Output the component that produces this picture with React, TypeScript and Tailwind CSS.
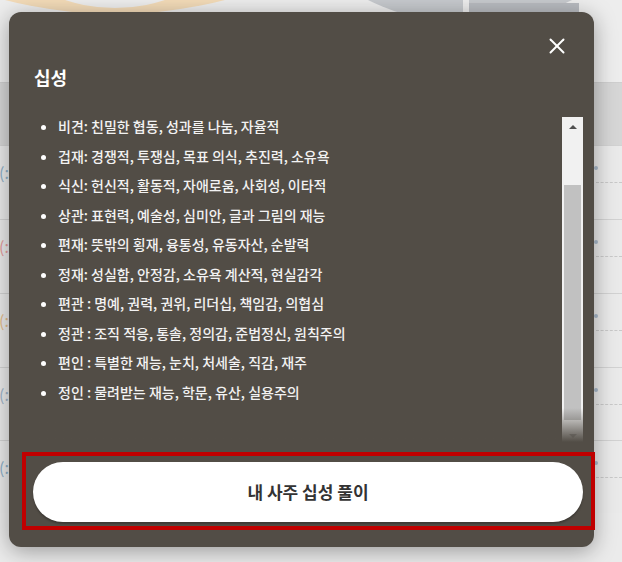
import { X } from "lucide-react";

const traits = [
	"비견: 친밀한 협동, 성과를 나눔, 자율적",
	"겁재: 경쟁적, 투쟁심, 목표 의식, 추진력, 소유욕",
	"식신: 헌신적, 활동적, 자애로움, 사회성, 이타적",
	"상관: 표현력, 예술성, 심미안, 글과 그림의 재능",
	"편재: 뜻밖의 횡재, 융통성, 유동자산, 순발력",
	"정재: 성실함, 안정감, 소유욕 계산적, 현실감각",
	"편관 : 명예, 권력, 권위, 리더십, 책임감, 의협심",
	"정관 : 조직 적응, 통솔, 정의감, 준법정신, 원칙주의",
	"편인 : 특별한 재능, 눈치, 처세술, 직감, 재주",
	"정인 : 물려받는 재능, 학문, 유산, 실용주의",
];

// rows of the page underneath the dialog
const rows = [
	{ mark: "text-[#8eaec6]", h: "h-[74px]" },
	{ mark: "text-[#e39b9b]", h: "h-[74px]" },
	{ mark: "text-[#e2bb8a]", h: "h-[74px]" },
	{ mark: "text-[#9fb3c7]", h: "h-[73px]" },
	{ mark: "text-[#8eaec6]", h: "h-[73px]" },
];

function PageBehind() {
	return (
		<div className="flex flex-col w-full h-full bg-[#ebebeb]">
			<div className="h-[82px] shrink-0 bg-[#ededed]">
				<svg width="622" height="82" viewBox="0 0 622 82">
					<circle cx="115" cy="-425" r="439" fill="#f3dbb8" />
					<circle cx="115" cy="-152" r="160" fill="#eeeeee" />
					<circle cx="470" cy="-205" r="229" fill="#c6c9cd" />
					<rect x="463" y="0" width="6" height="30" fill="#ededed" />
					<rect x="469" y="3" width="110" height="30" fill="#b8bbc0" />
				</svg>
			</div>
			<div className="h-[63px] shrink-0 bg-[#d6d6d6] border-t border-[#cfcfcf]" />
			{rows.map((r, i) => (
				<div
					key={i}
					className={`${r.h} shrink-0 flex flex-col border-t border-[#d2d2d2] bg-[#eaeaea]`}
				>
					<div className="h-[36px] flex items-end justify-between">
						<span className={`${r.mark} text-[16px] leading-none -ml-[1px] pb-[2px]`}>(:</span>
						<span className="w-[4px] h-[4px] rounded-full bg-[#a9bacb] mr-[24px] mb-[12px]" />
					</div>
					<div className="border-t border-dashed border-[#c9c9c9] ml-[596px]" />
				</div>
			))}
		</div>
	);
}

function FakeScrollbar() {
	return (
		<div className="w-[21px] shrink-0 mt-[5px] flex flex-col bg-[#f1f1f1]">
			<div className="h-[68px] flex justify-center pt-[8px]">
				<div className="w-0 h-0 border-l-[4px] border-r-[4px] border-b-[4px] border-l-transparent border-r-transparent border-b-[#505050]" />
			</div>
			<div className="h-[235px] mx-[2px] bg-[#c1c1c1]" />
			<div className="flex-1 flex justify-center items-end pb-[4px]">
				<div className="w-0 h-0 border-l-[4px] border-r-[4px] border-t-[4px] border-l-transparent border-r-transparent border-t-[#a3a3a3]" />
			</div>
		</div>
	);
}

export default function App() {
	return (
		<div
			className="relative w-[622px] h-[562px] overflow-hidden"
			style={{ fontFamily: '"Noto Sans CJK KR", "Noto Sans", sans-serif' }}
		>
			<PageBehind />

			<div className="absolute left-[9px] top-[12px] w-[585px] h-[535px] flex flex-col pt-[22px] pl-[25px] pr-[11px] pb-[17px] rounded-[12px] bg-[#524d46] shadow-[0_4px_22px_rgba(0,0,0,0.35)]">
				<div className="h-[24px] flex justify-end items-center pr-[13px]">
					<X className="w-[26px] h-[26px] text-white" strokeWidth={1.8} />
				</div>
				<h2 className="mt-[7px] h-[24px] leading-[24px] text-[18px] font-bold text-white">
					십성
				</h2>

				<div className="relative mt-[23px] h-[330px] flex">
					<ul className="flex-1 list-disc pl-[24px] text-[14px] font-medium leading-[29.5px] text-[#f2f2f2] marker:text-white">
						{traits.map((t) => (
							<li key={t}>{t}</li>
						))}
					</ul>
					<FakeScrollbar />
					<div className="absolute left-0 right-0 bottom-0 h-[34px] bg-gradient-to-b from-[#524d4600] to-[#524d46]" />
				</div>

				<div className="mt-[10px] -mx-[12px] h-[78px] border-[4px] border-[#c00000] pt-[6px] pl-[7px] pr-[8px]">
					<button className="w-full h-[60px] rounded-full bg-white shadow-[0_2px_2px_rgba(0,0,0,0.25)] text-[17px] font-bold text-[#333]">
						내 사주 십성 풀이
					</button>
				</div>
			</div>
		</div>
	);
}
